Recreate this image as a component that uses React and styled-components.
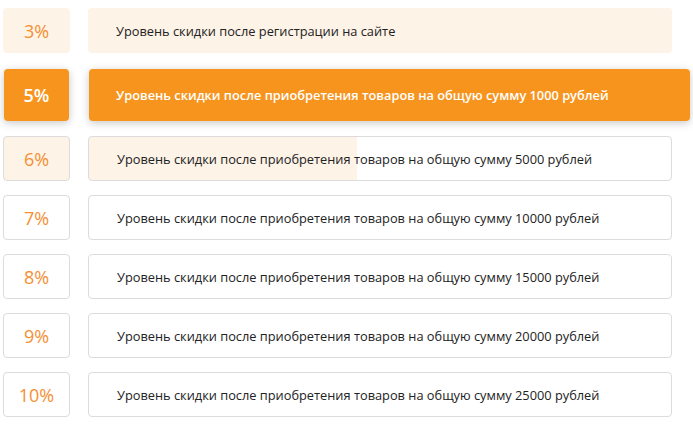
import styled, { createGlobalStyle } from "styled-components";

const GlobalStyle = createGlobalStyle`
  body {
    margin: 0;
    background: #ffffff;
    font-family: "Open Sans", "Noto Sans", sans-serif;
  }
`;

const List = styled("div")({
  display: "flex",
  flexDirection: "column",
  gap: "14px",
  padding: "8px 21px 0 3px",
});

const Row = styled("div")`
  display: flex;
  align-items: stretch;
  gap: ${(props) => (props.active ? "20px" : "18px")};
  height: ${(props) => (props.active ? "52px" : "45px")};
  margin: ${(props) => (props.active ? "2px -18px 1px 1px" : "0")};
`;

const Percent = styled("div")`
  display: flex;
  align-items: center;
  justify-content: center;
  flex: 0 0 ${(props) => (props.active ? "65px" : "67px")};
  box-sizing: border-box;
  border-radius: 4px;
  font-size: 18px;
  font-weight: ${(props) => (props.active ? 600 : 500)};
  color: ${(props) => (props.active ? "#ffffff" : "#f68f33")};
  background: ${(props) =>
    props.active ? "#f7941e" : props.tint ? "#fdf3e7" : "#ffffff"};
  border: ${(props) =>
    props.active || props.flat ? "none" : "1px solid #dcdcdc"};
  box-shadow: ${(props) =>
    props.active ? "0 2px 8px rgba(0, 0, 0, 0.22)" : "none"};
`;

const Bar = styled("div")`
  display: flex;
  align-items: center;
  flex: 1;
  box-sizing: border-box;
  padding-left: ${(props) => (props.active ? "27px" : "28px")};
  border-radius: 4px;
  font-size: 12.8px;
  font-weight: ${(props) => (props.active ? 600 : 400)};
  color: ${(props) => (props.active ? "#ffffff" : "#222222")};
  background: ${(props) =>
    props.active
      ? "#f7941e"
      : `linear-gradient(to right, #fdf3e7 ${props.fill}%, #ffffff ${props.fill}%)`};
  border: ${(props) =>
    props.active || props.flat ? "none" : "1px solid #dcdcdc"};
  box-shadow: ${(props) =>
    props.active ? "0 2px 8px rgba(0, 0, 0, 0.22)" : "none"};
`;

const levels = [
  { pct: "3%", text: "Уровень скидки после регистрации на сайте", flat: true, fill: 100, tint: true },
  { pct: "5%", sum: "1000", active: true },
  { pct: "6%", sum: "5000", fill: 46, tint: true },
  { pct: "7%", sum: "10000", fill: 0 },
  { pct: "8%", sum: "15000", fill: 0 },
  { pct: "9%", sum: "20000", fill: 0 },
  { pct: "10%", sum: "25000", fill: 0 },
];

const App = () => {
  return (
    <>
      <GlobalStyle />
      <List>
        {levels.map((l) => (
          <Row key={l.pct} active={l.active}>
            <Percent active={l.active} flat={l.flat} tint={l.tint}>
              {l.pct}
            </Percent>
            <Bar active={l.active} flat={l.flat} fill={l.fill}>
              {l.text ||
                `Уровень скидки после приобретения товаров на общую сумму ${l.sum} рублей`}
            </Bar>
          </Row>
        ))}
      </List>
    </>
  );
};

export default App;
